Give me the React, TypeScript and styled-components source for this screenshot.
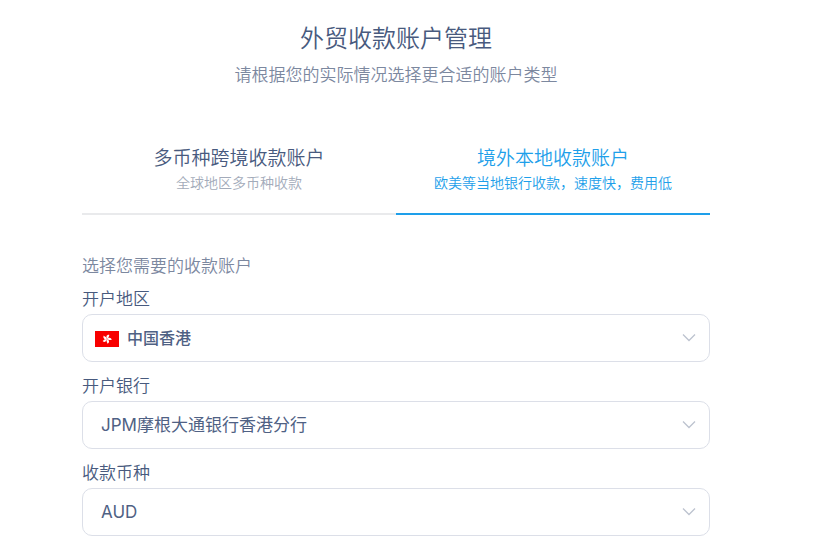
import React, { useState } from "react";
import styled, { createGlobalStyle } from "styled-components";

const GlobalStyle = createGlobalStyle`
  *, *::before, *::after { box-sizing: border-box; }
  body {
    margin: 0;
    background: #fff;
    color: #485a7e;
    font-family: Inter, "Noto Sans CJK SC", sans-serif;
    font-weight: 350;
  }
`;

const Page = styled.main`
  padding: 21px 105px 10px 82px;
`;

const Header = styled.header`
  display: flex;
  flex-direction: column;
  align-items: center;
  gap: 6px;
  text-align: center;
`;

const Title = styled.h1`
  margin: 0;
  font-size: 24px;
  line-height: 36px;
  font-weight: 350;
`;

const Subtitle = styled.p`
  margin: 0;
  font-size: 17px;
  line-height: 24px;
  color: #7c889f;
`;

const Tabs = styled.div`
  display: grid;
  grid-template-columns: 1fr 1fr;
  margin-top: 58px;
`;

const Tab = styled.button<{ $active: boolean }>`
  display: flex;
  flex-direction: column;
  align-items: center;
  padding: 0 0 19px;
  border: 0;
  border-bottom: 2px solid ${(p) => (p.$active ? "#1e9fea" : "#e9eaec")};
  background: none;
  color: ${(p) => (p.$active ? "#1e9fea" : "#485a7e")};
  font-family: inherit;
  font-weight: 350;
  cursor: pointer;
`;

const TabTitle = styled.span`
  font-size: 19px;
  line-height: 27px;
`;

const TabNote = styled.span<{ $active: boolean }>`
  font-size: 14px;
  line-height: 22px;
  color: ${(p) => (p.$active ? "#1e9fea" : "#a3abba")};
`;

const Form = styled.form`
  display: flex;
  flex-direction: column;
  gap: 12px;
`;

const FormTitle = styled.h2`
  margin: 39px 0 -3px;
  font-size: 17px;
  line-height: 24px;
  font-weight: 350;
  color: #7c889f;
`;

const Field = styled.div`
  display: flex;
  flex-direction: column;
  gap: 3px;
`;

const Label = styled.label`
  font-size: 17px;
  line-height: 24px;
`;

const SelectBox = styled.div`
  position: relative;
`;

const Select = styled.select<{ $flag?: boolean }>`
  display: block;
  appearance: none;
  width: 100%;
  height: 48px;
  padding: 0 40px 0 ${(p) => (p.$flag ? 44 : 18)}px;
  border: 1px solid #dcdfe8;
  border-radius: 10px;
  background: #fff;
  color: #4f6184;
  font-family: inherit;
  font-size: ${(p) => (p.$flag ? 16 : 17)}px;
  font-weight: ${(p) => (p.$flag ? 500 : 400)};
`;

const Flag = styled.svg`
  position: absolute;
  left: 13px;
  top: 17px;
  width: 24px;
  height: 16px;
  pointer-events: none;
`;

const Chevron = styled.svg`
  position: absolute;
  right: 14px;
  top: 19px;
  width: 14px;
  height: 10px;
  pointer-events: none;
`;

function HongKongFlag() {
  return (
    <Flag viewBox="0 0 24 16" aria-hidden="true">
      <rect width="24" height="16" fill="#f80000" />
      <g fill="#fff">
        {[20, 92, 164, 236, 308].map((angle) => (
          <path
            key={angle}
            d="M12 7.8C10 6.5 10.1 3.7 12.9 3.3C12.3 4.6 13.9 5.6 12 7.8Z"
            transform={`rotate(${angle} 12 8)`}
          />
        ))}
      </g>
    </Flag>
  );
}

const tabs = [
  { title: "多币种跨境收款账户", note: "全球地区多币种收款" },
  { title: "境外本地收款账户", note: "欧美等当地银行收款，速度快，费用低" },
];

const fields = [
  { id: "region", label: "开户地区", value: "中国香港", flag: true },
  { id: "bank", label: "开户银行", value: "JPM摩根大通银行香港分行", flag: false },
  { id: "currency", label: "收款币种", value: "AUD", flag: false },
];

export default function App() {
  const [current, setCurrent] = useState(1);

  return (
    <>
      <GlobalStyle />
      <Page lang="zh-CN">
        <Header>
          <Title>外贸收款账户管理</Title>
          <Subtitle>请根据您的实际情况选择更合适的账户类型</Subtitle>
        </Header>
        <Tabs role="tablist">
          {tabs.map((tab, i) => (
            <Tab
              key={tab.title}
              type="button"
              role="tab"
              aria-selected={current === i}
              $active={current === i}
              onClick={() => setCurrent(i)}
            >
              <TabTitle>{tab.title}</TabTitle>
              <TabNote $active={current === i}>{tab.note}</TabNote>
            </Tab>
          ))}
        </Tabs>
        <Form>
          <FormTitle>选择您需要的收款账户</FormTitle>
          {fields.map((field) => (
            <Field key={field.id}>
              <Label htmlFor={field.id}>{field.label}</Label>
              <SelectBox>
                <Select id={field.id} $flag={field.flag}>
                  <option>{field.value}</option>
                </Select>
                {field.flag && <HongKongFlag />}
                <Chevron viewBox="0 0 14 10" aria-hidden="true">
                  <path d="M1 1.5L7 7.5L13 1.5" fill="none" stroke="#bdc3cf" strokeWidth="1.3" />
                </Chevron>
              </SelectBox>
            </Field>
          ))}
        </Form>
      </Page>
    </>
  );
}
